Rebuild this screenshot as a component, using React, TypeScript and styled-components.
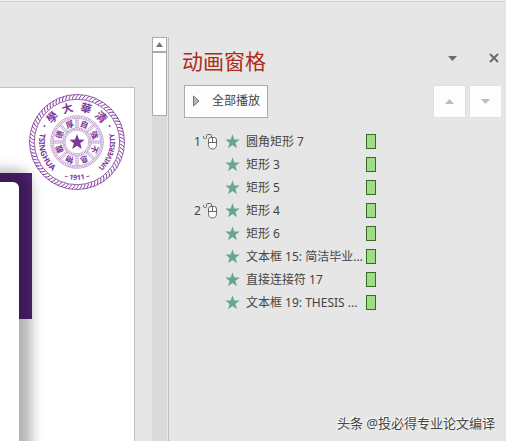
import React from "react";
import styled, { createGlobalStyle } from "styled-components";

const GlobalStyle = createGlobalStyle`
  *, *::before, *::after { box-sizing: border-box; }
  html, body, #root { height: 100%; }
  body {
    margin: 0;
    background: #e6e6e6;
    color: #444;
    font: 12px/16px "Noto Sans", "Noto Sans CJK SC", sans-serif;
  }
`;

const Page = styled.div`
  position: relative;
  display: flex;
  flex-direction: column;
  height: 100vh;
  overflow: hidden;
`;

const Ribbon = styled.div`
  flex: none;
  height: 2px;
  background: #f0f0f0;
  border-bottom: 1px solid #d2d2d2;
`;

const Workspace = styled.div`
  display: flex;
  flex: 1;
  min-height: 0;
`;

const Editor = styled.main`
  display: flex;
  flex: 1;
  min-width: 0;
  padding: 85px 17px 0 0;
`;

const Slide = styled.section`
  position: relative;
  flex: 1;
  overflow: hidden;
  background: #fff;
  border: solid #c0c0c0;
  border-width: 1px 1px 0 0;
`;

const PurpleBlock = styled.div`
  position: absolute;
  top: 85px;
  left: 0;
  right: 102px;
  height: 146px;
  background: #552377;
`;

const Card = styled.div`
  position: absolute;
  top: 94px;
  left: -30px;
  right: 115px;
  bottom: -40px;
  background: #fff;
  border-radius: 6px;
  box-shadow: 0 0 13px 12px rgba(0, 0, 0, 0.3);
`;

const SealSvg = styled.svg`
  position: absolute;
  top: 5px;
  right: 8px;
  width: 98px;
  height: 98px;
`;

const Scrollbar = styled.div`
  display: flex;
  flex: none;
  flex-direction: column;
  width: 17px;
  margin-top: 35px;
  padding-right: 1px;
  border-right: 1px solid #bcbcbc;
`;

const ScrollTrack = styled.div`
  flex: 1;
  background: #dadada;
`;

const ScrollButton = styled.button`
  display: grid;
  place-items: center;
  width: 15px;
  height: 15px;
  padding: 0;
  background: #fff;
  border: 1px solid #ababab;
`;

const ScrollThumb = styled.div`
  height: 64px;
  background: #fff;
  border: 1px solid #ababab;
`;

const Pane = styled.aside`
  flex: none;
  width: 337px;
  padding: 46px 4px 0 13px;
`;

const PaneHeader = styled.header`
  display: flex;
  align-items: center;
  height: 26px;
`;

const Title = styled.h2`
  flex: 1;
  margin: 0;
  color: #b02b17;
  font-size: 21px;
  line-height: 26px;
  font-weight: 400;
`;

const PlainButton = styled.button`
  display: grid;
  place-items: center;
  width: 16px;
  height: 16px;
  margin: 0 0 6px 26px;
  padding: 0;
  background: none;
  border: 0;
`;

const Toolbar = styled.div`
  display: flex;
  gap: 3px;
  margin: 11px 0 0 2px;
`;

const PlayButton = styled.button`
  display: flex;
  align-items: center;
  gap: 12px;
  height: 33px;
  margin-right: auto;
  padding: 0 7px 2px 8px;
  background: #fdfdfd;
  border: 1px solid #ababab;
  color: #444;
  font: inherit;
`;

const MoveButton = styled.button`
  display: grid;
  place-items: center;
  width: 33px;
  height: 33px;
  padding: 0;
  background: #fdfdfd;
  border: 1px solid #e0e0e0;
`;

const EffectList = styled.ol`
  margin: 12px 0 0 12px;
  padding: 0;
  list-style: none;
`;

const EffectRow = styled.li`
  display: grid;
  grid-template-columns: 9px 22px 21px 120px 10px;
  align-items: center;
  height: 23px;
  white-space: nowrap;
`;

const TriggerIcon = styled.span`
  display: flex;
`;

const TimeBar = styled.span`
  height: 15px;
  background: #9edc86;
  border: 1px solid #376b25;
`;

const Credit = styled.div`
  position: absolute;
  right: 11px;
  bottom: 8px;
  color: #444;
  font-size: 13px;
  line-height: 20px;
  text-shadow: -1px -1px 0 #fff;
`;

type TriangleProps = { up?: boolean; color: string; width?: number };

function Triangle({ up, color, width = 9 }: TriangleProps) {
  return (
    <svg width={width} height="5" viewBox="0 0 10 5" preserveAspectRatio="none" aria-hidden="true">
      <path d={up ? "M0 5 5 0l5 5z" : "M0 0h10L5 5z"} fill={color} />
    </svg>
  );
}

function Mouse() {
  return (
    <svg width="15" height="17" viewBox="0 0 15 17" fill="none" stroke="#666" aria-label="单击时">
      <path d="M.5 3V4.500Q.5 5.500 1.500 5.500H2.500Q3.500 5.500 3.500 4.500V2.500Q3.500 1.500 4.500 1.500H7.500Q8.500 1.500 8.500 2.500V5" />
      <path d="M5.500 7Q5.500 4.500 8 4.500H11.500Q13.500 4.500 13.500 7V11.500Q13.500 16 9.500 16T5.500 11.500Z" fill="#fff" />
      <path d="M5.500 9.500h8M9.500 4.500v5" />
    </svg>
  );
}

function EffectStar() {
  return (
    <svg width="15" height="15" viewBox="0 0 15 15" aria-hidden="true">
      <path d="M7.500.3 9.300 5.500 14.700 5.600 10.400 8.900 12 14.200 7.500 11.100 3 14.200 4.600 8.900.3 5.600 5.700 5.500z" fill="#67a68f" />
    </svg>
  );
}

const purple = "#7d369b";
const outerChars = [["學", -45], ["大", -16], ["華", 15], ["清", 44]] as const;
const innerChars = ["自", "強", "不", "息", "物", "載", "德", "厚"];
const range = (count: number) => Array.from({ length: count }, (_, i) => i);

function Seal() {
  return (
    <SealSvg viewBox="-49 -49 98 98" role="img" aria-label="Tsinghua University">
      <defs>
        <path id="seal-text" d="M0-38A38 38 0 0 0 0 38A38 38 0 0 0 0-38" />
      </defs>
      <g fill="none" stroke={purple}>
        <circle r="47.5" strokeWidth="0.8" />
        <circle r="42.7" strokeWidth="0.8" />
        {range(80).map((i) => (
          <path key={i} d="M-1.400-43Q-.8-45.500 1.400-47.300" strokeWidth="0.9" transform={`rotate(${i * 4.5})`} />
        ))}
      </g>
      <g fill="none" stroke={purple} opacity="0.6">
        <circle r="26.300" strokeWidth="0.7" />
        <circle r="24.900" strokeWidth="1.200" strokeDasharray="1 .8" />
        <circle r="23.700" strokeWidth="0.6" />
        <circle r="14.300" strokeWidth="0.6" />
        <circle r="13" strokeWidth="1.200" strokeDasharray="1 .7" />
        <circle r="11.800" strokeWidth="0.6" />
        {range(8).map((i) => (
          <g key={i} transform={`rotate(${i * 45})`}>
            <path d="M-1.200-14.300v-9.300M1.200-14.300v-9.300" strokeWidth="0.6" />
            <path d="M0-14.300v-9.300" strokeWidth="1.400" strokeDasharray="1 .7" opacity=".7" />
          </g>
        ))}
      </g>
      <g fill={purple}>
        <path d="M0-8 2-2.500 7.700-2.300 3.200 1.200 4.800 6.900 0 3.700-4.800 6.900-3.200 1.200-7.700-2.300-2-2.500z" />
        <circle cx="-32.500" cy="-16" r="0.9" />
        <circle cx="32.500" cy="-16" r="0.9" />
        <g fontFamily='"Noto Sans CJK TC", sans-serif' fontWeight="700" textAnchor="middle">
          {outerChars.map(([char, angle]) => (
            <text key={char} y="-31" fontSize="11" transform={`rotate(${angle})`}>{char}</text>
          ))}
          {innerChars.map((char, i) => (
            <text key={char} y="-16" fontSize="8" transform={`rotate(${22.5 + i * 45})`}>{char}</text>
          ))}
        </g>
        <g fontFamily='"Noto Sans", sans-serif' fontSize="7" fontWeight="700" textAnchor="middle">
          <text fontSize="8"><textPath href="#seal-text" startOffset="30%">TSINGHUA</textPath></text>
          <text><textPath href="#seal-text" startOffset="50%">– 1911 –</textPath></text>
          <text><textPath href="#seal-text" startOffset="70%">UNIVERSITY</textPath></text>
        </g>
      </g>
    </SealSvg>
  );
}

const effects: { name: string; order?: number }[] = [
  { name: "圆角矩形 7", order: 1 },
  { name: "矩形 3" },
  { name: "矩形 5" },
  { name: "矩形 4", order: 2 },
  { name: "矩形 6" },
  { name: "文本框 15: 简洁毕业..." },
  { name: "直接连接符 17" },
  { name: "文本框 19: THESIS ..." },
];

export default function App() {
  return (
    <Page>
      <GlobalStyle />
      <Ribbon />
      <Workspace>
        <Editor>
          <Slide>
            <PurpleBlock />
            <Card />
            <Seal />
          </Slide>
        </Editor>
        <Scrollbar>
          <ScrollButton aria-label="向上滚动"><Triangle up color="#777" width={7} /></ScrollButton>
          <ScrollThumb />
          <ScrollTrack />
        </Scrollbar>
        <Pane>
          <PaneHeader>
            <Title>动画窗格</Title>
            <PlainButton aria-label="窗格选项"><Triangle color="#6a6a6a" /></PlainButton>
            <PlainButton aria-label="关闭">
              <svg width="10" height="10" viewBox="0 0 10 10" aria-hidden="true">
                <path d="m1 1 8 8M9 1 1 9" stroke="#6a6a6a" strokeWidth="2" />
              </svg>
            </PlainButton>
          </PaneHeader>
          <Toolbar>
            <PlayButton>
              <svg width="7" height="12" viewBox="0 0 7 12" aria-hidden="true">
                <path d="M.5 1v10L6 6z" fill="#b8b8b8" stroke="#777" />
              </svg>
              全部播放
            </PlayButton>
            <MoveButton aria-label="上移"><Triangle up color="#bdbdbd" /></MoveButton>
            <MoveButton aria-label="下移"><Triangle color="#bdbdbd" /></MoveButton>
          </Toolbar>
          <EffectList>
            {effects.map(({ name, order }) => (
              <EffectRow key={name}>
                <span>{order}</span>
                <TriggerIcon>{order && <Mouse />}</TriggerIcon>
                <EffectStar />
                <span>{name}</span>
                <TimeBar />
              </EffectRow>
            ))}
          </EffectList>
        </Pane>
      </Workspace>
      <Credit>头条 @投必得专业论文编译</Credit>
    </Page>
  );
}
